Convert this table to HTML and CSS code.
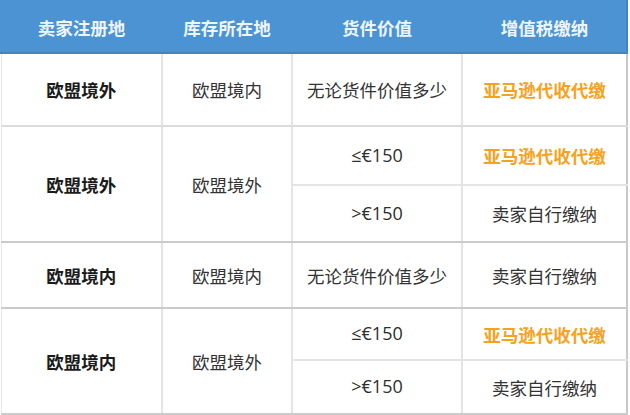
FILE: index.html
```html
<!DOCTYPE html>
<html lang="zh-CN">
<head>
<meta charset="utf-8">
<link rel="stylesheet" href="styles.css">
</head>
<body>
<table class="vat">
  <colgroup>
    <col class="c1"><col class="c2"><col class="c3"><col class="c4">
  </colgroup>
  <thead>
    <tr class="head">
      <th>卖家注册地</th><th>库存所在地</th><th>货件价值</th><th>增值税缴纳</th>
    </tr>
  </thead>
  <tbody>
    <tr class="r1 group">
      <td class="seller">欧盟境外</td><td>欧盟境内</td><td>无论货件价值多少</td><td class="amz">亚马逊代收代缴</td>
    </tr>
    <tr class="r2a">
      <td class="seller" rowspan="2">欧盟境外</td><td rowspan="2">欧盟境外</td><td class="num">≤€150</td><td class="amz">亚马逊代收代缴</td>
    </tr>
    <tr class="r2b group">
      <td class="num">&gt;€150</td><td>卖家自行缴纳</td>
    </tr>
    <tr class="r3 group">
      <td class="seller">欧盟境内</td><td>欧盟境内</td><td>无论货件价值多少</td><td>卖家自行缴纳</td>
    </tr>
    <tr class="r4a">
      <td class="seller" rowspan="2">欧盟境内</td><td rowspan="2">欧盟境外</td><td class="num">≤€150</td><td class="amz">亚马逊代收代缴</td>
    </tr>
    <tr class="r4b group">
      <td class="num">&gt;€150</td><td>卖家自行缴纳</td>
    </tr>
  </tbody>
</table>
</body>
</html>
```

FILE: styles.css
```css
html, body {
  margin: 0;
  padding: 0;
  background: #ffffff;
}
body {
  font-family: "Noto Sans CJK SC", "Noto Sans", sans-serif;
  font-size: 17.5px;
  color: #333333;
}
.vat {
  width: 626px;
  table-layout: fixed;
  border-collapse: collapse;
}
.c1 { width: 161px; }
.c2 { width: 130px; }
.c3 { width: 170px; }
.c4 { width: 165px; }
.vat th, .vat td {
  padding: 0;
  text-align: center;
  vertical-align: middle;
  border: 2px solid #e4e4e4;
  line-height: 1.2;
}
.head th {
  height: 50px;
  background: #4b93d3;
  color: #eef5fc;
  font-weight: 700;
  border-color: #4b93d3;
  border-bottom: 2px solid #3f86c8;
}
.vat td:first-child { border-left: 1px solid #e8e8e8; }
.vat td:last-child, .vat tr.r2b td:last-child, .vat tr.r4b td:last-child { border-right: 2px solid #c9c9c9; }
.head th:last-child { border-right: 2px solid #3f86c8; }
.r1 td { height: 71px; }
.r2a td { height: 57px; }
.r2b td { height: 55px; }
.r3 td { height: 64px; }
.r4a td { height: 50px; }
.r4b td { height: 52px; }
.group td, td.seller, .r2a td[rowspan], .r4a td[rowspan] {
  border-bottom: 2px solid #cbcbcb;
}
.r1 td { border-bottom-color: #dcdcdc; }
.num {
  font-family: "Open Sans", "DejaVu Sans", "Noto Sans CJK SC", sans-serif;
  font-size: 18px;
  color: #2e2e2e;
}
.seller {
  font-weight: 700;
  color: #1b1b1b;
}
.amz {
  font-weight: 700;
  color: #f5a21c;
}
```
